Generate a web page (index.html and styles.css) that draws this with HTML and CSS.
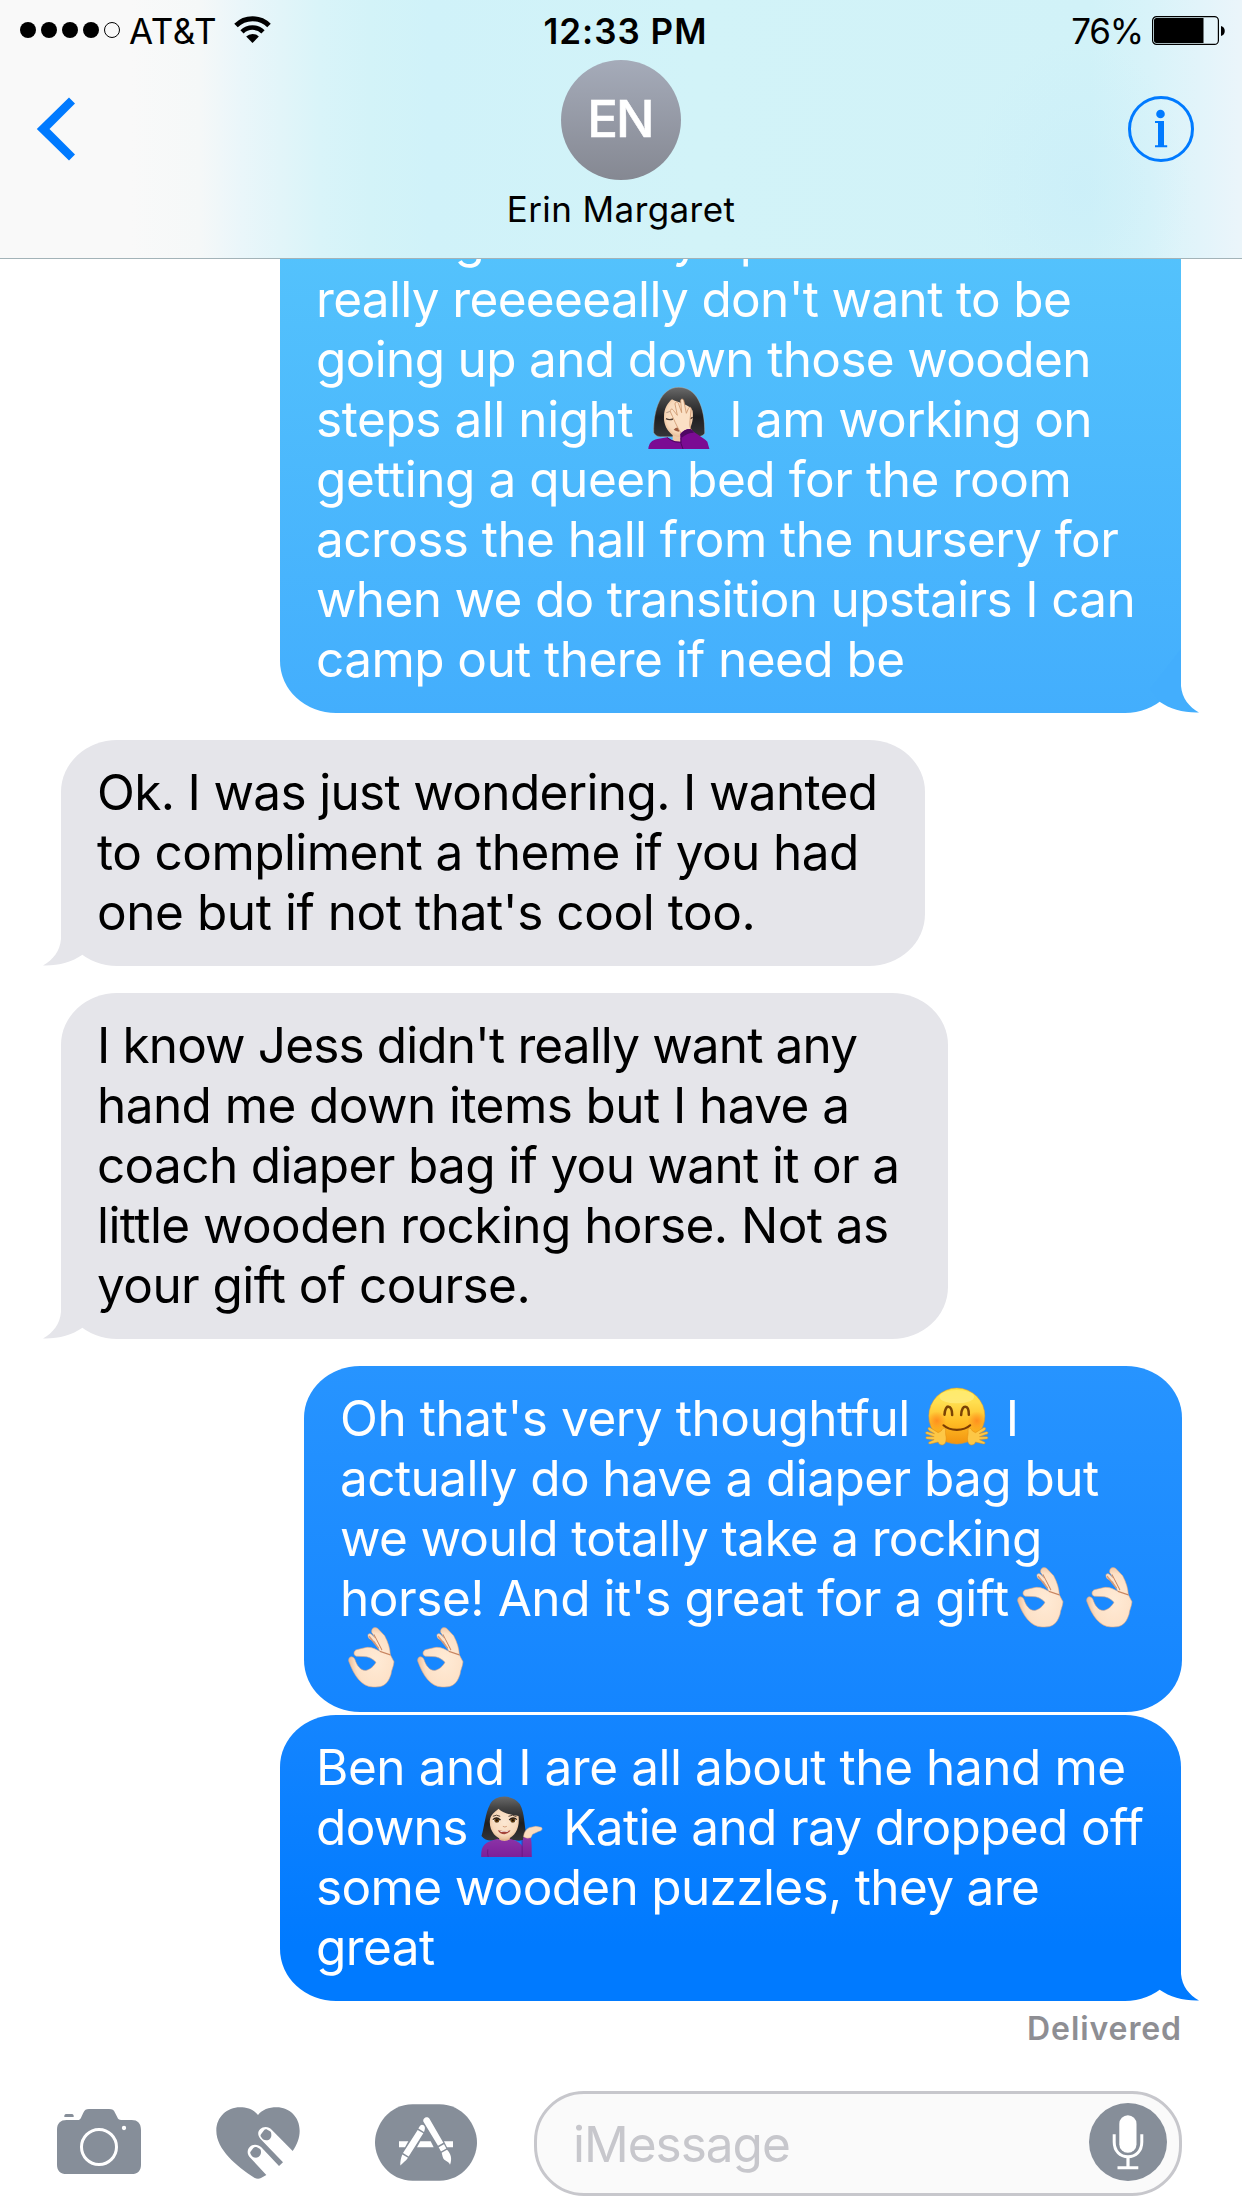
FILE: index.html
```html
<!DOCTYPE html>
<html lang="en">
<head>
<meta charset="utf-8">
<title>Messages</title>
<link rel="stylesheet" href="styles.css">
</head>
<body>
<svg class="defs" width="0" height="0" aria-hidden="true">
  <defs>
    <linearGradient id="hair" x1="0" y1="0" x2="0" y2="1">
      <stop offset="0" stop-color="#6a6a6a"/><stop offset=".25" stop-color="#454545"/><stop offset=".6" stop-color="#1f1f21"/><stop offset="1" stop-color="#353538"/>
    </linearGradient>
    <radialGradient id="skin" cx=".5" cy=".45" r=".6">
      <stop offset="0" stop-color="#fce8d3"/><stop offset=".7" stop-color="#f8d9bb"/><stop offset="1" stop-color="#e3b48c"/>
    </radialGradient>
    <radialGradient id="palm" cx=".6" cy=".55" r=".6">
      <stop offset="0" stop-color="#ffebd6"/><stop offset=".75" stop-color="#fde1c7"/><stop offset="1" stop-color="#ecbd97"/>
    </radialGradient>
    <linearGradient id="shirt" x1="0" y1="0" x2="0" y2="1">
      <stop offset="0" stop-color="#8c35a8"/><stop offset="1" stop-color="#7d1f99"/>
    </linearGradient>
    <linearGradient id="sun" x1="0" y1="0" x2="0" y2="1">
      <stop offset="0" stop-color="#ffe23f"/><stop offset=".25" stop-color="#ffdf50"/><stop offset=".6" stop-color="#ffbe26"/><stop offset="1" stop-color="#f2930f"/>
    </linearGradient>
    <radialGradient id="blush">
      <stop offset="0" stop-color="#ff7e1c" stop-opacity=".75"/><stop offset="1" stop-color="#ff7e1c" stop-opacity="0"/>
    </radialGradient>
    <symbol id="facepalm" overflow="visible">
      <g transform="translate(-7 -12) scale(.33333)">
        <path d="M41 158C40 90 62 22 116 22C170 22 195 80 194 160C188 170 172 172 156 170H72C58 172 46 168 41 158Z" fill="url(#hair)" stroke="#c9b9a9" stroke-opacity=".55" stroke-width="2"/>
        <path d="M98 160H138V190C128 198 108 198 98 190Z" fill="#efc9a8"/>
        <path d="M72 110C72 85 84 68 96 58C112 68 148 72 158 92C164 140 138 170 116 170C92 170 70 140 72 110Z" fill="url(#skin)"/>
        <path d="M78 116Q88 121 99 117M144 116Q152 118 158 112" fill="none" stroke="#4b3a30" stroke-width="4"/>
        <path d="M79 98Q88 93 97 96" fill="none" stroke="#8b776b" stroke-width="2"/>
        <path d="M101 149Q110 138 122 145L116 155Q108 154 101 149Z" fill="#9c5a3f"/>
        <path d="M25 207C26 190 36 180 52 177L82 172Q108 190 132 184L150 176Q196 172 208 207Z" fill="#7b0b93"/>
        <path d="M82 173Q105 193 132 184" fill="none" stroke="#4d075f" stroke-width="3"/>
        <path d="M122 158C111 142 99 112 91 95C90 86 97 85 101 92L112 106L105 72C106 64 113 64 116 72L125 98L122 62C124 54 131 57 132 65L139 100L145 86C149 78 155 82 153 90L150 122C149 137 150 144 154 150C150 164 135 168 122 158Z" fill="#fbe0c5" stroke="#cc966d" stroke-width="2.500"/>
        <path d="M121 162C128 152 142 146 152 147C164 160 190 172 202 185L208 207H131C124 195 119 178 121 162Z" fill="#7b0b93"/>
        <path d="M121 162C128 152 142 146 152 147L162 158Q142 158 124 174Z" fill="#4e0763"/>
        <path d="M129 207Q120 190 123 174" fill="none" stroke="#4d075f" stroke-width="3"/>
      </g>
    </symbol>
    <symbol id="hug" overflow="visible">
      <g transform="translate(-1.500 -11) scale(.33333)">
        <circle cx="106" cy="108" r="84" fill="url(#sun)" stroke="#ee9a1a" stroke-width="1.5"/>
        <ellipse cx="106" cy="50" rx="52" ry="20" fill="#fff6a0" opacity=".45"/>
        <circle cx="46" cy="122" r="28" fill="url(#blush)"/><circle cx="166" cy="122" r="28" fill="url(#blush)"/>
        <path d="M69 104C70 86 76 79 81 80C88 81 92 90 92 105M119 105C120 87 126 79 132 80C139 81 142 91 142 104" fill="none" stroke="#7a4305" stroke-width="7.5" stroke-linecap="round"/>
        <path d="M66 136C85 154 127 154 146 136" fill="none" stroke="#7a3c04" stroke-width="6.5" stroke-linecap="round"/>
        <path fill="#fdc746" stroke="#e28c12" stroke-width="1.5" d="M72 157C74 141 66 140 59 153L50 158L26 143C18 142 17 147 24 152L39 161L17 155C10 156 11 161 18 163L38 170L16 170C10 172 13 177 19 177L38 179L23 186C18 190 23 193 29 191L50 186C52 196 70 201 73 184C76 173 72 168 72 157Z"/>
        <path transform="translate(212 0) scale(-1 1)" fill="#fdc746" stroke="#e28c12" stroke-width="1.5" d="M72 157C74 141 66 140 59 153L50 158L26 143C18 142 17 147 24 152L39 161L17 155C10 156 11 161 18 163L38 170L16 170C10 172 13 177 19 177L38 179L23 186C18 190 23 193 29 191L50 186C52 196 70 201 73 184C76 173 72 168 72 157Z"/>
      </g>
    </symbol>
    <symbol id="tipping" overflow="visible">
      <g transform="translate(-10.500 -10) scale(.33333)">
        <path d="M33 138C42 110 44 70 58 44C72 14 124 10 148 42C164 70 160 110 170 142C162 152 146 154 132 150H72C58 154 42 150 33 138Z" fill="url(#hair)"/>
        <path d="M86 138H118V160C108 168 94 168 86 160Z" fill="#e3b48f"/>
        <path d="M58 92C60 72 74 66 84 56C98 70 126 76 144 78C150 118 128 148 102 148C76 148 56 122 58 92Z" fill="url(#skin)"/>
        <path d="M67 79Q78 72 89 79M114 79Q126 72 138 80" fill="none" stroke="#54443a" stroke-width="3"/>
        <ellipse cx="79" cy="91" rx="10" ry="8" fill="#fff"/><ellipse cx="127" cy="91" rx="10" ry="8" fill="#fff"/>
        <circle cx="79" cy="91" r="7.5" fill="#6a4314"/><circle cx="127" cy="91" r="7.5" fill="#6a4314"/>
        <circle cx="79" cy="91" r="3.5" fill="#1b1005"/><circle cx="127" cy="91" r="3.5" fill="#1b1005"/>
        <path d="M67 89Q78 78 90 90M116 90Q128 78 139 89" fill="none" stroke="#241a14" stroke-width="3.5"/>
        <path d="M82 121Q102 126 120 121Q113 133 102 133Q88 133 82 121Z" fill="#a3443a"/><path d="M87 122.500Q102 126 115 122.500L110 126H92Z" fill="#fff"/>
        <path d="M97 109Q103 113 109 109" fill="none" stroke="#d59f7c" stroke-width="3"/>
        <path d="M32 201C31 164 44 156 82 146Q102 160 120 147C138 152 150 158 156 170L158 142H181C185 165 183 186 184 201Z" fill="url(#shirt)"/>
        <path d="M155 201V150M53 201Q50 188 52 178" fill="none" stroke="#651580" stroke-width="2.5"/>
        <path d="M159 140C161 126 166 118 176 113L196 109L212 112C218 116 214 123 205 124L186 133L181 143Q168 147 159 140Z" fill="#fbdcbe" stroke="#e0ae87" stroke-width="1.5"/>
      </g>
    </symbol>
    <symbol id="ok" overflow="visible">
      <g transform="translate(-40 -281) scale(.33333 .43365)">
        <path d="M146 717C145 706 159 704 165 714C170 727 182 739 196 739C209 738 222 729 228 720C216 711 205 707 190 707L169 706C159 704 160 693 170 691L198 686C213 684 228 690 240 695L224 673L207 665C201 658 204 652 213 655L226 664L215 651C213 639 229 637 237 645L254 659C265 675 270 688 271 703L282 719C281 730 274 738 273 748C262 775 244 778 219 777C184 776 163 752 146 717Z" fill="url(#palm)" stroke="#e2a880" stroke-width="1.5"/>
        <path d="M222 656L246 692M240 695L271 703" fill="none" stroke="#c98560" stroke-width="2.500"/>
        <path d="M207 660L236 688" fill="none" stroke="#d99a76" stroke-width="4"/>
      </g>
    </symbol>
  </defs>
</svg>

<div class="phone">
  <header class="header">
    <div class="status">
      <div class="status-left">
        <div class="signal"><i></i><i></i><i></i><i></i><i class="empty"></i></div>
        <span class="carrier">AT&amp;T</span>
        <svg class="wifi" width="37" height="27" viewBox="0 0 37 27">
          <path d="M2 9.500A23.500 23.500 0 0 1 35 9.500" fill="none" stroke="#000" stroke-width="5"/>
          <path d="M8 15.800A15 15 0 0 1 29 15.800" fill="none" stroke="#000" stroke-width="4.600"/>
          <path d="M12.200 20.500A9 9 0 0 1 24.800 20.500L18.500 27Z"/>
        </svg>
      </div>
      <span class="clock">12:33 PM</span>
      <div class="status-right">
        <span class="percent">76%</span>
        <svg class="battery" width="73" height="29" viewBox="0 0 73 29">
          <rect x=".6" y=".6" width="65.800" height="27.800" rx="4" fill="none" stroke="#000" stroke-width="1.200"/>
          <path d="M4.500 2H51.500V27H4.500A2.500 2.500 0 0 1 2 24.500V4.500A2.500 2.500 0 0 1 4.500 2Z"/>
          <path d="M69 10C74 11 74 19 69 20Z"/>
        </svg>
      </div>
    </div>
    <div class="nav">
      <svg class="back" width="40" height="64" viewBox="0 0 40 64"><path d="M.8 32L33 .5L39 6.500L13.500 32L39 57.500L33 63.500Z" fill="#007aff"/></svg>
      <div class="contact">
        <div class="avatar">EN</div>
        <div class="name">Erin Margaret</div>
      </div>
      <svg class="info" width="66" height="66" viewBox="0 0 66 66">
        <circle cx="33" cy="33" r="31.500" fill="none" stroke="#007aff" stroke-width="3"/>
        <circle cx="32.500" cy="18" r="4.300" fill="#007aff"/>
        <path d="M27 25H36V49.300H39.200V51.200H27V49.300H30V27H27Z" fill="#007aff"/>
      </svg>
    </div>
  </header>

  <main class="thread">
    <div class="bubble sent first">
      <span class="line hidden-top">starting definitely up</span>
      <span class="line tight">really reeeeeally don't want to be</span>
      <span class="line tight">going up and down those wooden</span>
      <span class="line wide">steps all night <svg class="emoji"><use href="#facepalm"/></svg> <span class="tight">I am working on</span></span>
      <span class="line wide">getting a queen bed for the room</span>
      <span class="line">across the hall from the nursery for</span>
      <span class="line tight">when we do transition upstairs I can</span>
      <span class="line">camp out there if need be</span>
      <svg class="tail" width="50" height="64" viewBox="0 0 50 64"><path d="M31 0V37C32 49 39 58 49 63.500C34 64 20 60 10 53L0 40Z" fill="#43aefd"/></svg>
    </div>
    <div class="bubble received wondering">
      <span class="line tight">Ok. I was just wondering. I wanted</span>
      <span class="line">to compliment a theme if you had</span>
      <span class="line wide">one but if not that's cool too.</span>
      <svg class="tail" width="50" height="64" viewBox="0 0 50 64"><path d="M31 0V37C32 49 39 58 49 63.500C34 64 20 60 10 53L0 40Z" fill="#e5e5ea"/></svg>
    </div>
    <div class="bubble received handmedown">
      <span class="line narrow">I know Jess didn't really want any</span>
      <span class="line">hand me down items but I have a</span>
      <span class="line tight">coach diaper bag if you want it or a</span>
      <span class="line">little wooden rocking horse. Not as</span>
      <span class="line">your gift of course.</span>
      <svg class="tail" width="50" height="64" viewBox="0 0 50 64"><path d="M31 0V37C32 49 39 58 49 63.500C34 64 20 60 10 53L0 40Z" fill="#e5e5ea"/></svg>
    </div>
    <div class="bubble sent thoughtful">
      <span class="line wide">Oh that's very thoughtful <svg class="emoji"><use href="#hug"/></svg> I</span>
      <span class="line">actually do have a diaper bag but</span>
      <span class="line tight">we would totally take a rocking</span>
      <span class="line wide">horse! And it's great for a gift<svg class="emoji"><use href="#ok"/></svg><svg class="emoji"><use href="#ok"/></svg></span>
      <span class="line"><svg class="emoji"><use href="#ok"/></svg><svg class="emoji"><use href="#ok"/></svg></span>
    </div>
    <div class="bubble sent puzzles">
      <span class="line wide">Ben and I are all about the hand me</span>
      <span class="line tight">downs <svg class="emoji"><use href="#tipping"/></svg> Katie and ray dropped off</span>
      <span class="line tight">some wooden puzzles, they are</span>
      <span class="line">great</span>
      <svg class="tail" width="50" height="64" viewBox="0 0 50 64"><path d="M31 0V37C32 49 39 58 49 63.500C34 64 20 60 10 53L0 40Z" fill="#007aff"/></svg>
    </div>
    <div class="receipt">Delivered</div>
  </main>

  <footer class="composer">
    <svg class="camera" width="84" height="65" viewBox="171 117 252 195" preserveAspectRatio="none">
      <path d="M171 180C171 160 181 150 200 150H232C238 150 241 148 243 143L250 128C254 120 258 117 267 117H327C337 117 342 120 345 128L352 142C354 148 357 150 364 150H395C413 150 423 160 423 180V284C423 302 413 312 395 312H200C181 312 171 302 171 284Z" fill="#868e99"/>
      <path d="M193 141V138C193 134 196 132 200 132H214C218 132 221 134 221 138V141Z" fill="#868e99"/>
      <circle cx="297" cy="231" r="52.500" fill="none" stroke="#fff" stroke-width="9"/>
      <circle cx="372" cy="174" r="6.500" fill="#fff"/>
    </svg>
    <svg class="heart" width="84" height="72" viewBox="648 113 252 216" preserveAspectRatio="none">
      <path d="M774 137C762 121 742 114 720 114C681 114 649 143 649 184C649 240 710 291 763 325C770 329 777 329 783 326L799 317L748 262C736 247 747 226 765 226C773 226 779 229 784 234L837 290L849 279L781 208C767 192 778 173 797 173C804 173 810 176 815 181L878 245C891 226 899 206 899 184C899 143 868 114 830 114C806 114 787 121 774 137Z" fill="#868e99"/>
      <path d="M782 196L791 184C794 180 798 179 802 181L810 186C813 188 814 191 814 196C815 205 808 213 799 213C792 213 787 209 784 204C782 201 781 198 782 196Z" fill="#868e99"/>
      <path d="M751 248L760 236C763 233 767 232 771 234L779 238C782 240 783 243 783 249C783 258 776 265 768 265C761 265 756 261 753 256C751 253 750 250 751 248Z" fill="#868e99"/>
    </svg>
    <svg class="apps" width="102" height="77" viewBox="1125 101 306 232" preserveAspectRatio="none">
      <path d="M1125 217C1125 165 1167 102 1238 102H1318C1389 102 1431 165 1431 217C1431 269 1389 332 1318 332H1238C1167 332 1125 269 1125 217Z" fill="#868e99"/>
      <path d="M1197 213H1225L1215 231H1197ZM1261 213H1292L1301 231H1251ZM1332 213H1359V231H1341Z" fill="#fff"/>
      <path d="M1253 179L1270 189L1226 259L1209 249ZM1255 175C1260 164 1265 161 1271 165C1276 169 1276 176 1272 185ZM1207 253L1224 263C1218 272 1208 279 1201 286C1200 276 1203 262 1207 253Z" fill="#fff"/>
      <path d="M1270 154C1268 142 1282 137 1288 145L1330 218L1314 227ZM1316 231L1332 222L1339 235L1323 244ZM1325 248L1341 239C1353 250 1357 268 1350 284C1347 272 1331 274 1328 260Z" fill="#fff"/>
    </svg>
    <div class="field">
      <span class="placeholder">iMessage</span>
      <svg class="mic" width="78" height="78" viewBox="0 0 78 78">
        <circle cx="39" cy="39" r="39" fill="#868e99"/>
        <rect x="30.300" y="12.300" width="17.200" height="37.500" rx="8.600" fill="#fff"/>
        <path d="M25.200 31.300V39C25.200 48 31 53.800 39 53.800C47 53.800 52.800 48 52.800 39V31.300" fill="none" stroke="#fff" stroke-width="3"/>
        <path d="M37.400 54H40.600V63.300H49.300V66.300H28.500V63.300H37.400Z" fill="#fff"/>
      </svg>
    </div>
  </footer>
</div>
</body>
</html>
```
FILE: styles.css
```css
* {
  box-sizing: border-box;
}

body {
  margin: 0;
  background: #fff;
  color: #000;
  font-family: "Inter", "Liberation Sans", sans-serif;
}

svg {
  display: block;
}

.defs {
  position: absolute;
}

.phone {
  width: 1242px;
  height: 2208px;
  display: flex;
  flex-direction: column;
  overflow: hidden;
}

/* Translucent navigation bar */
.header {
  flex: none;
  height: 259px;
  border-bottom: 1px solid #a3b3b8;
  background:
    radial-gradient(ellipse 110px 150px at 1080px 190px, rgba(198, 236, 249, .45), rgba(198, 236, 249, 0)),
    linear-gradient(90deg, #f9f9f9 0, #f9f9f9 130px, #f5f8f8 200px, #eaf6fa 240px, #e2f5f9 280px, #d9f4f9 320px, #d3f3f8 370px, #d0f2f9 430px, #d2f3f8 700px, #d1f2f8 1090px, #d8f3f9 1150px, #e2f4fa 1200px, #ebf5fa 1242px);
}

.status {
  height: 60px;
  display: grid;
  grid-template-columns: 1fr auto 1fr;
  font-size: 35px;
  line-height: 63px;
}

.status-left,
.status-right {
  display: flex;
  align-items: flex-start;
}

.status-left {
  padding-left: 20px;
}

.status-right {
  justify-content: flex-end;
  padding-right: 17px;
}

.signal {
  display: flex;
  gap: 5px;
  padding-top: 22px;
}

.signal i {
  width: 16px;
  height: 16px;
  border-radius: 50%;
  background: #000;
}

.signal .empty {
  background: none;
  border: 1px solid #000;
}

.carrier {
  margin-left: 9px;
  letter-spacing: .6px;
}

.wifi {
  margin: 16px 0 0 17px;
}

.clock {
  font-weight: 600;
  letter-spacing: 1px;
  margin-left: 9px;
}

.percent {
  letter-spacing: -1.2px;
}

.battery {
  margin: 16px 0 0 9px;
}

.nav {
  display: grid;
  grid-template-columns: 1fr auto 1fr;
}

.back {
  margin: 37px 0 0 36px;
}

.contact {
  display: flex;
  flex-direction: column;
  align-items: center;
}

.avatar {
  width: 120px;
  height: 120px;
  border-radius: 50%;
  background: linear-gradient(#a5abb9, #858892);
  color: #fff;
  font-size: 51px;
  font-weight: 500;
  line-height: 117px;
  letter-spacing: -2px;
  text-indent: -2px;
  text-align: center;
  -webkit-text-stroke: .5px #fff;
}

.name {
  font-size: 35px;
  line-height: 42px;
  margin-top: 8px;
  letter-spacing: .42px;
}

.info {
  justify-self: end;
  margin: 36px 48px 0 0;
}

/* Conversation */
.thread {
  flex: 1;
  display: flex;
  flex-direction: column;
  align-items: flex-start;
  overflow: hidden;
}

.bubble {
  position: relative;
  flex: none;
  padding: 22px 0 24px 36px;
  margin-top: 27px;
  border-radius: 56px / 52px;
  font-size: 49.5px;
  line-height: 60px;
}

.line {
  display: block;
  height: 60px;
  white-space: nowrap;
  letter-spacing: -.57px;
}

.tight {
  letter-spacing: -.66px;
}

.wide {
  letter-spacing: -.44px;
}

.narrow {
  letter-spacing: -.87px;
}

.hidden-top {
  letter-spacing: -1.25px;
}

.sent {
  align-self: flex-end;
  margin-right: 61px;
  color: #fff;
}

.received {
  margin-left: 61px;
  background: #e5e5ea;
}

.first {
  width: 901px;
  margin-top: -72px;
  background: linear-gradient(#56c5fc, #43aefd);
}

.wondering {
  width: 864px;
}

.handmedown {
  width: 887px;
}

.thoughtful {
  width: 878px;
  margin-right: 60px;
  background: linear-gradient(#2794ff, #1485ff);
}

.puzzles {
  width: 901px;
  margin-top: 3px;
  background: linear-gradient(#1485ff, #007aff 80%);
}

.tail {
  position: absolute;
  bottom: 0;
  right: -19px;
}

.received .tail {
  right: auto;
  left: -19px;
  transform: scaleX(-1);
}

.emoji {
  display: inline-block;
  width: 69px;
  height: 56px;
  vertical-align: -11px;
  overflow: visible;
}

.receipt {
  align-self: flex-end;
  margin: 8px 60px 0 0;
  color: #8e8e93;
  font-size: 32px;
  font-weight: 600;
  line-height: 39px;
  letter-spacing: .9px;
}

/* Message composer */
.composer {
  flex: none;
  height: 118px;
  display: flex;
  align-items: flex-start;
  padding-left: 57px;
}

.camera {
  margin-top: 19px;
}

.heart {
  margin: 17px 0 0 75px;
}

.apps {
  margin: 14px 0 0 75px;
}

.field {
  display: flex;
  justify-content: space-between;
  align-items: flex-start;
  width: 648px;
  height: 105px;
  margin: 1px 0 0 57px;
  padding: 9px 12px 0 36px;
  border: 3px solid #c7c7cc;
  border-radius: 50px;
  background: #fafafa;
}

.placeholder {
  color: #c7c7cc;
  font-size: 49.5px;
  line-height: 60px;
  padding-top: 11px;
  letter-spacing: -1px;
}
```
